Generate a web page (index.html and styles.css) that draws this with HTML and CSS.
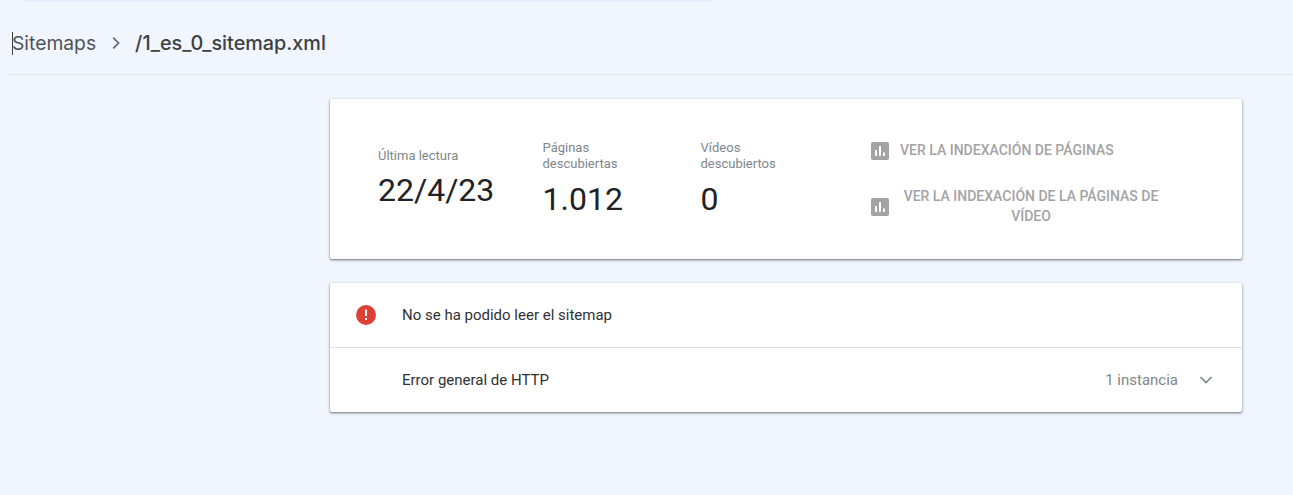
FILE: index.html
```html
<!DOCTYPE html>
<html lang="es">
<head>
<meta charset="utf-8">
<title>Sitemaps</title>
<link rel="stylesheet" href="styles.css">
</head>
<body>
<div class="topstrip"></div>
<header class="crumbs">
  <span class="caret"></span>
  <span class="crumb-parent">Sitemaps</span>
  <svg class="crumb-sep" viewBox="0 0 24 24" width="24" height="24"><path d="M9.2 6.600 14.600 12l-5.400 5.400" fill="none" stroke="#5f6368" stroke-width="1.600"/></svg>
  <span class="crumb-current">/1_es_0_sitemap.xml</span>
</header>
<main class="content">
  <section class="card stats">
    <div class="stat stat-date">
      <div class="stat-label">Última lectura</div>
      <div class="stat-value">22/4/23</div>
    </div>
    <div class="stat stat-pages">
      <div class="stat-label">Páginas<br>descubiertas</div>
      <div class="stat-value">1.012</div>
    </div>
    <div class="stat stat-videos">
      <div class="stat-label">Vídeos<br>descubiertos</div>
      <div class="stat-value">0</div>
    </div>
    <div class="links">
      <a class="link link-pages">
        <svg class="chart" viewBox="0 0 18 18" width="18" height="18"><path fill="#a3a3a3" d="M2 0h14a2 2 0 0 1 2 2v14a2 2 0 0 1-2 2H2a2 2 0 0 1-2-2V2a2 2 0 0 1 2-2Z"/><path fill="#fff" d="M4 8h2v6H4zM8 4h2v10H8zM12 10.500h2V14h-2z"/></svg>
        <span>VER LA INDEXACIÓN DE PÁGINAS</span>
      </a>
      <a class="link link-video">
        <svg class="chart" viewBox="0 0 18 18" width="18" height="18"><path fill="#a3a3a3" d="M2 0h14a2 2 0 0 1 2 2v14a2 2 0 0 1-2 2H2a2 2 0 0 1-2-2V2a2 2 0 0 1 2-2Z"/><path fill="#fff" d="M4 8h2v6H4zM8 4h2v10H8zM12 10.500h2V14h-2z"/></svg>
        <span class="link-wrap">VER LA INDEXACIÓN DE LA PÁGINAS DE VÍDEO</span>
      </a>
    </div>
  </section>
  <section class="card errors">
    <div class="row row-head">
      <svg class="err" viewBox="0 0 20 20" width="20" height="20"><circle cx="10" cy="10" r="10" fill="#dd4036"/><path fill="#fff" d="M9 4.500h2v6.500H9zM9 13h2v2H9z"/></svg>
      <span>No se ha podido leer el sitemap</span>
    </div>
    <div class="row row-item">
      <span class="row-title">Error general de HTTP</span>
      <span class="count">1 instancia</span>
      <svg class="chev" viewBox="0 0 16 16" width="16" height="16"><path d="M2.500 5 8 10.500 13.500 5" fill="none" stroke="#80868b" stroke-width="1.700"/></svg>
    </div>
  </section>
</main>
</body>
</html>
```
FILE: styles.css
```css
* { box-sizing: border-box; }
html, body { margin: 0; height: 100%; }
body {
  background: #f1f5fe;
  font-family: Roboto, "Liberation Sans", sans-serif;
  color: #202124;
  overflow: hidden;
}
.topstrip {
  width: 688px;
  height: 2px;
  margin-left: 24px;
  background: #e3edfc;
  border-radius: 0 0 4px 4px;
}
.crumbs {
  display: flex;
  align-items: center;
  height: 73px;
  margin-left: 8px;
  padding: 10px 0 0 4px;
  border-bottom: 1px solid #e2e4e6;
  font-family: Inter, Roboto, sans-serif;
  font-size: 20px;
}
.caret {
  width: 1px;
  height: 23px;
  background: #3c4043;
  margin-right: -1px;
}
.crumb-parent { color: #4f5256; font-size: 19.3px; font-weight: 400; }
.crumb-sep { margin: 0 7px 0 8px; }
.crumb-current { color: #3c4043; font-size: 19.8px; font-weight: 450; }
.content {
  padding: 24px 51px 0 330px;
  display: flex;
  flex-direction: column;
  gap: 24px;
}
.card {
  background: #fff;
  border-radius: 2px;
  box-shadow: 0 1px 2px rgba(60,64,67,.6), 0 1px 3px 1px rgba(60,64,67,.15);
}
.stats {
  height: 160px;
  display: flex;
  align-items: center;
  padding-left: 48px;
}
.stat-label { font-size: 13px; line-height: 16px; color: #80868b; }
.stat-value { font-size: 32px; line-height: 40px; font-weight: 400; color: #202124; margin-top: 6px; }
.stat-date { width: 165px; margin-right: -0.5px; }
.stat-pages { width: 158px; }
.stat-videos { width: 170px; margin-right: 0.5px; }
.stat-pages .stat-value, .stat-videos .stat-value { margin-top: 7px; }
.links {
  width: 295px;
  padding-top: 8px;
  display: flex;
  flex-direction: column;
  gap: 26px;
}
.link {
  display: flex;
  align-items: center;
  font-size: 14px;
  font-weight: 500;
  line-height: 20px;
  color: #a3a3a3;
}
.chart { flex: none; margin: 2px 11px 0 0; }
.link-wrap { text-align: center; flex: 1; padding-right: 4px; }
.errors { display: flex; flex-direction: column; }
.row {
  height: 65px;
  display: flex;
  align-items: center;
  font-size: 15px;
  color: #303134;
}
.row-head { padding-left: 26px; border-bottom: 1px solid #e0e0e0; }
.err { margin-right: 26px; flex: none; }
.row-item { padding: 0 28px 0 72px; height: 64px; }
.row-title { flex: 1; }
.count { color: #80868b; margin-right: 20px; }
```
